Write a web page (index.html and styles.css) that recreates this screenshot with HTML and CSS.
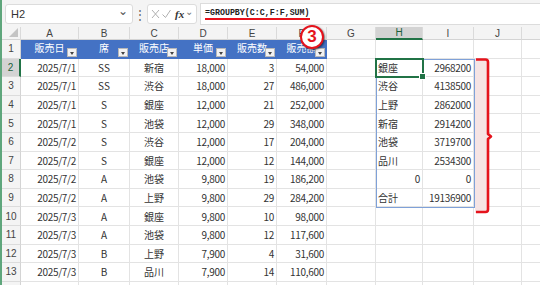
FILE: index.html
```html
<!DOCTYPE html>
<html lang="ja">
<head>
	<meta charset="UTF-8">
	<title>GROUPBY</title>
	<link rel="stylesheet" href="styles.css">
</head>
<body>
<div class="app">
	<div class="topbar">
		<div class="namebox"><span>H2</span><span class="chev">&#8964;</span></div>
		<div class="dots">&#8942;</div>
		<div class="fxbox">
			<svg class="ico" width="9" height="10" viewBox="0 0 9 10"><path d="M1 1 L8 9 M8 1 L1 9" stroke="#b0b0b0" stroke-width="1" fill="none"/></svg>
			<svg class="ico" width="9" height="10" viewBox="0 0 9 10"><path d="M0.5 5.5 L3.5 8.5 L8.5 1" stroke="#b0b0b0" stroke-width="1" fill="none"/></svg>
			<span class="fx">fx</span>
			<span class="chev small">&#8964;</span>
		</div>
		<div class="formula"><span class="ftext">=GROUPBY(C:C,F:F,SUM)</span></div>
	</div>

	<div class="sheet">
		<div class="row colhead">
			<div class="corner"><span class="tri"></span></div>
			<div>A</div><div>B</div><div>C</div><div>D</div><div>E</div><div>F</div><div>G</div>
			<div class="sel">H</div><div>I</div><div>J</div><div class="last"></div>
		</div>

		<div class="row">
			<div class="rh">1</div>
			<div class="th">販売日<i class="flt"></i></div>
			<div class="th">席<i class="flt"></i></div>
			<div class="th">販売店<i class="flt"></i></div>
			<div class="th">単価<i class="flt"></i></div>
			<div class="th">販売数<i class="flt"></i></div>
			<div class="th">販売額<i class="flt"></i></div>
			<div></div><div></div><div></div><div></div><div class="last"></div>
		</div>

		<div class="row">
			<div class="rh on">2</div>
			<div class="r">2025/7/1</div><div class="c">SS</div><div class="c">新宿</div><div class="r">18,000</div><div class="r">3</div><div class="r">54,000</div>
			<div></div><div class="l">銀座</div><div class="r">2968200</div><div></div><div class="last"></div>
		</div>
		<div class="row">
			<div class="rh">3</div>
			<div class="r">2025/7/1</div><div class="c">SS</div><div class="c">渋谷</div><div class="r">18,000</div><div class="r">27</div><div class="r">486,000</div>
			<div></div><div class="l">渋谷</div><div class="r">4138500</div><div></div><div class="last"></div>
		</div>
		<div class="row">
			<div class="rh">4</div>
			<div class="r">2025/7/1</div><div class="c">S</div><div class="c">銀座</div><div class="r">12,000</div><div class="r">21</div><div class="r">252,000</div>
			<div></div><div class="l">上野</div><div class="r">2862000</div><div></div><div class="last"></div>
		</div>
		<div class="row">
			<div class="rh">5</div>
			<div class="r">2025/7/1</div><div class="c">S</div><div class="c">池袋</div><div class="r">12,000</div><div class="r">29</div><div class="r">348,000</div>
			<div></div><div class="l">新宿</div><div class="r">2914200</div><div></div><div class="last"></div>
		</div>
		<div class="row">
			<div class="rh">6</div>
			<div class="r">2025/7/2</div><div class="c">S</div><div class="c">渋谷</div><div class="r">12,000</div><div class="r">17</div><div class="r">204,000</div>
			<div></div><div class="l">池袋</div><div class="r">3719700</div><div></div><div class="last"></div>
		</div>
		<div class="row">
			<div class="rh">7</div>
			<div class="r">2025/7/2</div><div class="c">S</div><div class="c">銀座</div><div class="r">12,000</div><div class="r">12</div><div class="r">144,000</div>
			<div></div><div class="l">品川</div><div class="r">2534300</div><div></div><div class="last"></div>
		</div>
		<div class="row">
			<div class="rh">8</div>
			<div class="r">2025/7/2</div><div class="c">A</div><div class="c">池袋</div><div class="r">9,800</div><div class="r">19</div><div class="r">186,200</div>
			<div></div><div class="r">0</div><div class="r">0</div><div></div><div class="last"></div>
		</div>
		<div class="row">
			<div class="rh">9</div>
			<div class="r">2025/7/2</div><div class="c">A</div><div class="c">上野</div><div class="r">9,800</div><div class="r">29</div><div class="r">284,200</div>
			<div></div><div class="l">合計</div><div class="r">19136900</div><div></div><div class="last"></div>
		</div>
		<div class="row">
			<div class="rh">10</div>
			<div class="r">2025/7/3</div><div class="c">A</div><div class="c">銀座</div><div class="r">9,800</div><div class="r">10</div><div class="r">98,000</div>
			<div></div><div></div><div></div><div></div><div class="last"></div>
		</div>
		<div class="row">
			<div class="rh">11</div>
			<div class="r">2025/7/3</div><div class="c">A</div><div class="c">池袋</div><div class="r">9,800</div><div class="r">12</div><div class="r">117,600</div>
			<div></div><div></div><div></div><div></div><div class="last"></div>
		</div>
		<div class="row">
			<div class="rh">12</div>
			<div class="r">2025/7/3</div><div class="c">B</div><div class="c">上野</div><div class="r">7,900</div><div class="r">4</div><div class="r">31,600</div>
			<div></div><div></div><div></div><div></div><div class="last"></div>
		</div>
		<div class="row">
			<div class="rh">13</div>
			<div class="r">2025/7/3</div><div class="c">B</div><div class="c">品川</div><div class="r">7,900</div><div class="r">14</div><div class="r">110,600</div>
			<div></div><div></div><div></div><div></div><div class="last"></div>
		</div>
		<div class="row short">
			<div class="rh"></div>
			<div></div><div></div><div></div><div></div><div></div><div></div>
			<div></div><div></div><div></div><div></div><div class="last"></div>
		</div>

		<!-- overlays -->
		<div class="spill"></div>
		<div class="cursor"><i class="handle"></i></div>
		<div class="badge">3</div>
		<svg class="brace" width="22" height="158" viewBox="0 0 22 158">
			<rect x="0" y="1" width="13" height="154" fill="#f6e4e4"/>
			<path d="M1 1.5 H10.5 Q13 1.5 13 4 V76 L16 78.5 L13 81 V151.5 Q13 154 10.5 154 H1" fill="none" stroke="#e5131c" stroke-width="2.6" stroke-linejoin="round"/>
		</svg>
	</div>
</div>
</body>
</html>
```

FILE: styles.css
```css
html, body {
	margin: 0;
	height: 100%;
	overflow: hidden;
}

body {
	font-family: "Noto Sans CJK JP", sans-serif;
	background: #ffffff;
	color: #333;
}

.app {
	border-left: 2px solid #5fa67c;
	height: 100%;
	box-sizing: border-box;
}

/* formula bar */
.topbar {
	height: 27px;
	background: #f4f4f4;
	display: flex;
	align-items: center;
	box-sizing: border-box;
	padding-left: 3px;
}
.namebox {
	width: 128px;
	height: 20px;
	box-sizing: border-box;
	background: #fff;
	border: 1px solid #dcdcdc;
	border-radius: 3px;
	display: flex;
	align-items: center;
	justify-content: space-between;
	padding: 0 4px 0 5px;
	font: 11px "Liberation Sans", sans-serif;
	color: #333;
}
.chev {
	color: #555;
	font-size: 12px;
	line-height: 1;
	margin-top: -6px;
}
.chev.small {
	font-size: 10px;
	margin-top: -5px;
	color: #777;
}
.dots {
	width: 14px;
	text-align: center;
	color: #666;
	font-size: 12px;
}
.fxbox {
	width: 50px;
	height: 20px;
	box-sizing: border-box;
	background: #fff;
	border: 1px solid #dcdcdc;
	border-radius: 3px;
	display: flex;
	align-items: center;
	gap: 1px;
	padding-left: 3px;
}
.ico {
	margin-right: 1px;
}
.fx {
	font: italic bold 11px "Liberation Serif", serif;
	color: #333;
	margin-left: 2px;
}
.formula {
	flex: 1;
	height: 22px;
	margin-left: 3px;
	background: #fff;
	border: 1px solid #dcdcdc;
	border-right: none;
	box-sizing: border-box;
	padding-left: 4px;
	display: flex;
	align-items: center;
}
.ftext {
	font: bold 8.3px "Liberation Mono", monospace;
	color: #222;
	border-bottom: 2px solid #e8111b;
	padding-bottom: 1px;
	margin-top: 1px;
}

/* grid */
.sheet {
	position: relative;
}
.row {
	display: grid;
	grid-template-columns: 19px 58px 51px 49px 49px 49px 50px 49px 47px 51px 48px 1fr;
	height: 18.6px;
}
.row.short {
	height: 6px;
}
.row > div {
	border-right: 1px solid #e3e3e3;
	border-bottom: 1px solid #e3e3e3;
	box-sizing: border-box;
	padding: 0 2px;
	display: flex;
	align-items: center;
	font-size: 10px;
	white-space: nowrap;
	overflow: hidden;
	position: relative;
}
.row > .last {
	border-right: none;
}
.r { justify-content: flex-end; letter-spacing: -0.3px; }
.c { justify-content: center; }
.l { justify-content: flex-start; }

.colhead {
	height: 13px;
}
.colhead > div {
	background: #f4f4f4;
	border-bottom-color: #d4d4d4;
	border-right-color: #dadada;
	justify-content: center;
	font: 10px "Liberation Sans", sans-serif;
	color: #444;
}
.colhead > .sel {
	background: #d3d3d3;
	border-bottom: 2px solid #217346;
	color: #1d5e3a;
}
.corner .tri {
	position: absolute;
	right: 2px;
	bottom: 2px;
	border-left: 9px solid transparent;
	border-bottom: 9px solid #c4c4c4;
}

.row > .rh {
	background: #f4f4f4;
	border-right-color: #d4d4d4;
	border-bottom-color: #dcdcdc;
	justify-content: center;
	padding: 0;
	font: 10px "Liberation Sans", sans-serif;
	color: #444;
}
.row > .rh.on {
	background: #d3d3d3;
	border-right: 2px solid #217346;
	color: #1d5e3a;
}

.row > .th {
	background: #4472c4;
	border-right-color: #4472c4;
	border-bottom-color: #4472c4;
	color: #fff;
	justify-content: center;
	padding-bottom: 2px;
}
.flt {
	position: absolute;
	right: 1px;
	bottom: 1px;
	width: 10px;
	height: 9px;
	box-sizing: border-box;
	background: #f2f2f2;
	border: 1px solid #b8b8b8;
}
.flt::after {
	content: "";
	position: absolute;
	left: 2px;
	top: 3px;
	border-left: 2.5px solid transparent;
	border-right: 2.5px solid transparent;
	border-top: 3px solid #444;
}

/* overlays */
.spill {
	position: absolute;
	left: 374px;
	top: 31.6px;
	width: 99px;
	height: 149px;
	border: 1px solid #7fa1d8;
	box-sizing: border-box;
	pointer-events: none;
}
.cursor {
	position: absolute;
	left: 373px;
	top: 30.6px;
	width: 49px;
	height: 20.6px;
	border: 2px solid #217346;
	box-sizing: border-box;
}
.handle {
	position: absolute;
	right: -4px;
	bottom: -4px;
	width: 5px;
	height: 5px;
	background: #217346;
	border: 1px solid #fff;
}
.badge {
	position: absolute;
	left: 298px;
	top: -2px;
	width: 24px;
	height: 24px;
	box-sizing: border-box;
	border-radius: 50%;
	background: #fff;
	border: 2.5px solid #e5131c;
	color: #e5131c;
	font: bold 17px "Liberation Sans", sans-serif;
	line-height: 19px;
	text-align: center;
	box-shadow: 1px 1px 2px rgba(0, 0, 0, 0.55);
}
.brace {
	position: absolute;
	left: 473px;
	top: 30.6px;
}
```
